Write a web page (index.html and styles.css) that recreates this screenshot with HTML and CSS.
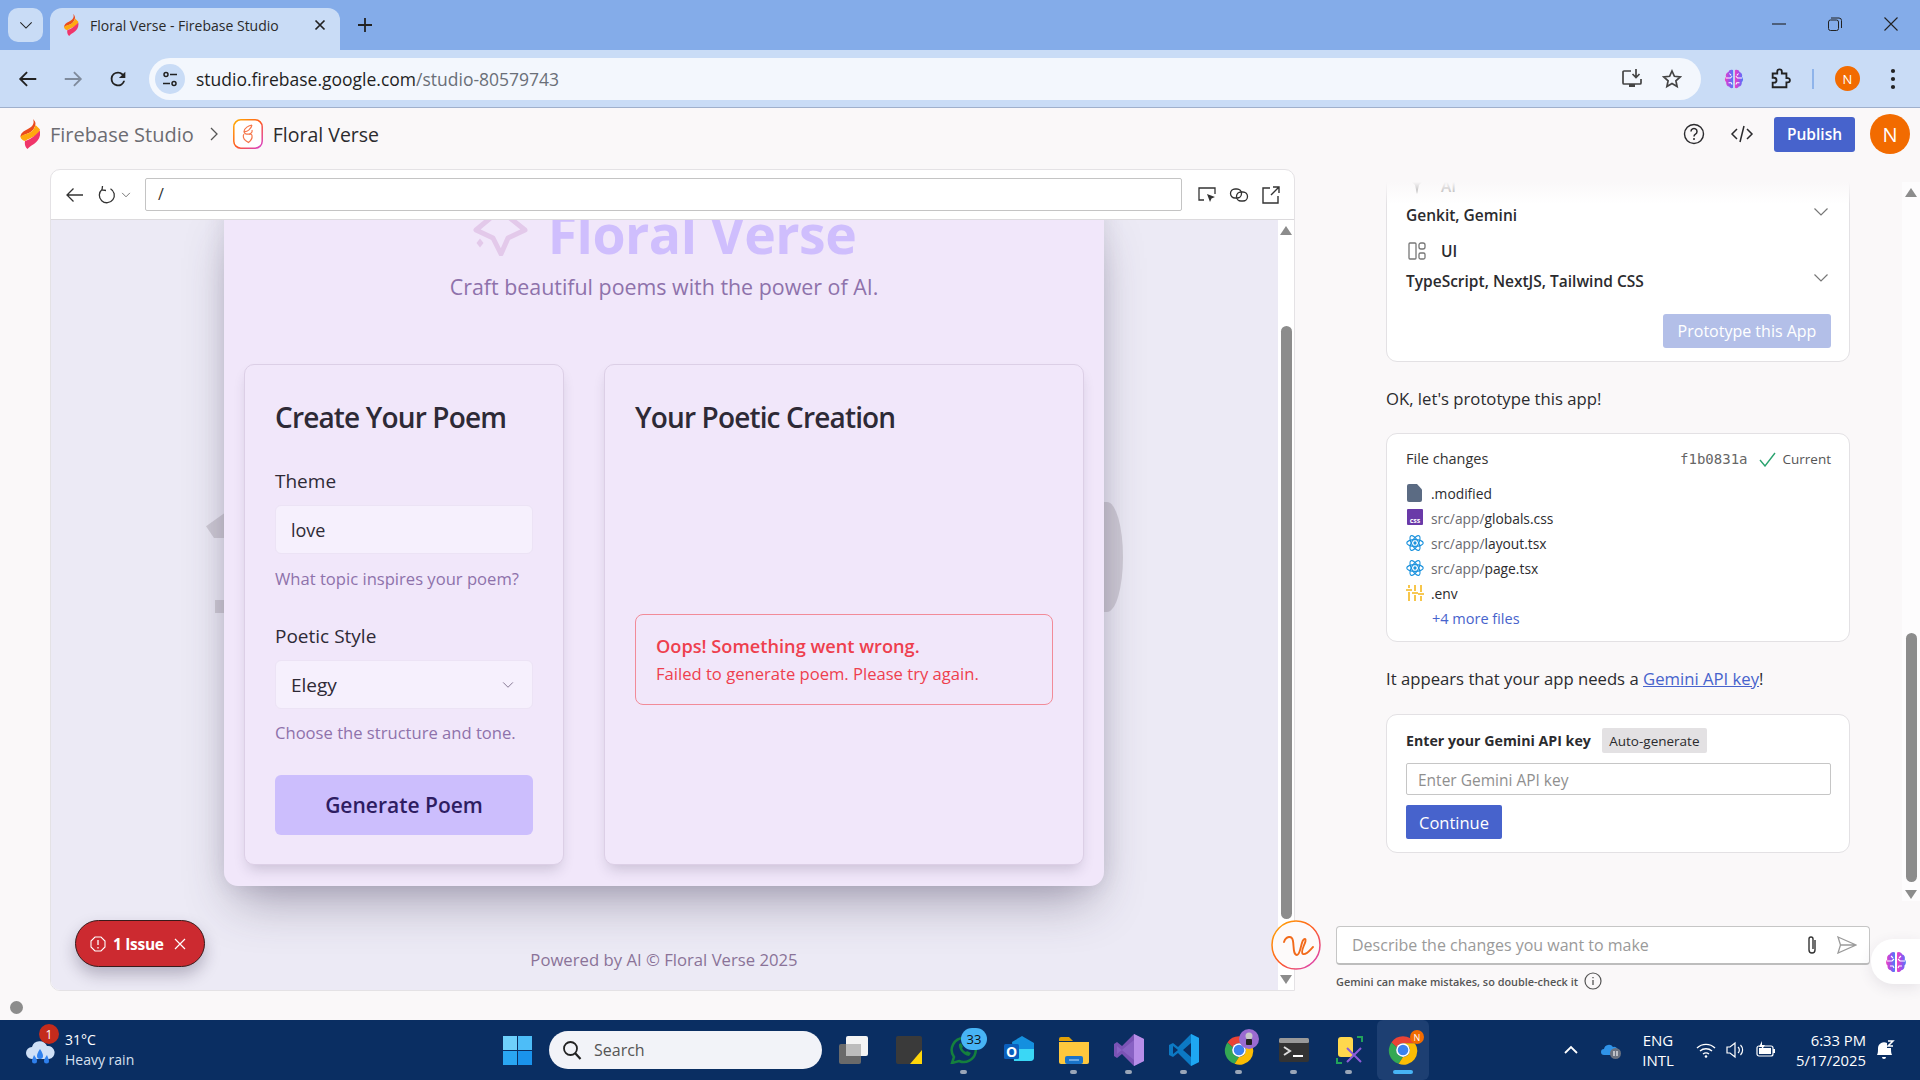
FILE: index.html
```html
<!DOCTYPE html>
<html lang="en">
<head>
<meta charset="utf-8">
<title>Floral Verse - Firebase Studio</title>
<link rel="stylesheet" href="styles.css">
</head>
<body>
<svg class="defs" width="0" height="0" aria-hidden="true">
  <defs>
    <linearGradient id="gBrain" x1="0" y1="0" x2="1" y2="0"><stop offset="0" stop-color="#f040c0"/><stop offset=".55" stop-color="#9a50ee"/><stop offset="1" stop-color="#4a80f5"/></linearGradient>
    <linearGradient id="gRing" x1="0" y1="0" x2="1" y2="1"><stop offset="0" stop-color="#ffb000"/><stop offset=".5" stop-color="#ff5a1f"/><stop offset="1" stop-color="#d63fd0"/></linearGradient>
    <symbol id="fire" viewBox="0 0 20 30">
      <path d="M13 0C15 5 12 8 7 10.500 3 12.500.5 14.500.5 18 3 16 7 15 10 13.500 12.500 12 15 9 15.500 5 15.500 3 14.500 1.500 13 0z" fill="#ea4b1d"/>
      <path d="M.5 18C1 20 2.500 21.500 5 22 8 20 12 18.500 14 17.500 17 16 19.500 14 20 10.500 18 8 17 7.500 15.500 6 14.500 10 12 12.500 9 14 5 15.500 1.500 16 .5 18z" fill="#ffa90e"/>
      <path d="M5 22C9 21 14 18 20 11.500 21 18 18 22 14 25 11 27 9 28 7.500 30 5 28 4.500 25 5 22z" fill="#f0356a"/>
    </symbol>
    <symbol id="brain" viewBox="0 0 24 24">
      <path d="M11 2.500c-2-1.200-4.500-.2-5 1.800C3.500 5 2.500 7.500 3.300 9.500 1.600 11 1.700 14 3.500 15.500c-.3 2.500 1 4.500 3.200 4.800 1 1.800 3 2.200 4.300 1.200z" fill="url(#gBrain)"/>
      <path d="M13 2.500c2-1.200 4.500-.2 5 1.800 2.500.7 3.500 3.200 2.700 5.200 1.700 1.500 1.600 4.500-.2 6 .3 2.500-1 4.500-3.200 4.800-1 1.800-3 2.200-4.300 1.200z" fill="url(#gBrain)"/>
      <path d="M3 11h5l2-2M21 11h-5l-2-2M6 16h3l1 2M18 16h-3l-1 2M7 6l2 2M17 6l-2 2" stroke="#fff" stroke-width="1.100" fill="none"/>
    </symbol>
    <symbol id="atom" viewBox="0 0 24 24">
      <g fill="none" stroke="#1b92dd" stroke-width="1.500">
        <ellipse cx="12" cy="12" rx="11" ry="4.500"/>
        <ellipse cx="12" cy="12" rx="11" ry="4.500" transform="rotate(60 12 12)"/>
        <ellipse cx="12" cy="12" rx="11" ry="4.500" transform="rotate(120 12 12)"/>
      </g>
      <circle cx="12" cy="12" r="2.200" fill="#1b92dd"/>
    </symbol>
    <symbol id="chev" viewBox="0 0 16 10"><path d="M1.500 1.500 8 8l6.500-6.500" fill="none" stroke="currentColor" stroke-width="1.200"/></symbol>
    <symbol id="chrome" viewBox="0 0 48 48">
      <path d="M24 2a22 22 0 0 1 19 11H24a11 11 0 0 0-10 6.500L5.500 12A22 22 0 0 1 24 2z" fill="#ea4335"/>
      <path d="M5.500 12 14 19.500A11 11 0 0 0 24 35l-7 11A22 22 0 0 1 5.500 12z" fill="#34a853"/>
      <path d="M43 13a22 22 0 0 1-26 33l7-11a11 11 0 0 0 9.500-16.500L24 13z" fill="#fbbc04"/>
      <circle cx="24" cy="24" r="11" fill="#fff"/><circle cx="24" cy="24" r="8.500" fill="#3b82f0"/>
    </symbol>
  </defs>
</svg>

<div class="screen">
  <header class="tabstrip">
    <div class="tabmenu"><svg width="14" height="9"><use href="#chev"/></svg></div>
    <div class="tab">
      <svg class="tab-fav" width="16" height="22"><use href="#fire"/></svg>
      <span class="tab-title">Floral Verse - Firebase Studio</span>
      <svg class="tab-x" width="12" height="12" viewBox="0 0 12 12"><path d="M1.500 1.500l9 9m0-9l-9 9" stroke="#222" stroke-width="1.700"/></svg>
    </div>
    <svg class="tab-plus" width="14" height="14" viewBox="0 0 14 14"><path d="M7 0v14M0 7h14" stroke="#222" stroke-width="1.800"/></svg>
    <div class="winctl">
      <svg width="14" height="14" viewBox="0 0 14 14"><path d="M0 7h14" stroke="#222" stroke-width="1.100"/></svg>
      <svg width="14" height="14" viewBox="0 0 14 14"><rect x=".5" y="3" width="10" height="10.500" rx="2" fill="none" stroke="#222"/><path d="M3 1h8a2.500 2.500 0 0 1 2.500 2.500V11" fill="none" stroke="#222"/></svg>
      <svg width="14" height="14" viewBox="0 0 14 14"><path d="M.5.5l13 13m0-13l-13 13" stroke="#222" stroke-width="1.100"/></svg>
    </div>
  </header>

  <div class="toolbar">
    <svg class="nav" width="22" height="22" viewBox="0 0 24 24"><path d="M21 12H4M11 4.500 3.500 12l7.500 7.500" fill="none" stroke="#222" stroke-width="2"/></svg>
    <svg class="nav" width="22" height="22" viewBox="0 0 24 24"><path d="M3 12h17M13 4.500l7.500 7.500-7.500 7.500" fill="none" stroke="#7f8b9c" stroke-width="2"/></svg>
    <svg class="nav" width="22" height="22" viewBox="0 0 24 24"><path d="M17.650 6.350A7.950 7.950 0 0 0 12 4a8 8 0 1 0 7.730 10h-2.080A6 6 0 1 1 12 6c1.660 0 3.140.690 4.220 1.780L13 11h7V4l-2.350 2.350z" fill="#222"/></svg>
    <div class="urlbar">
      <div class="site-ic"><svg width="18" height="18" viewBox="0 0 18 18"><g fill="none" stroke="#222" stroke-width="1.500"><circle cx="5" cy="4.500" r="2"/><circle cx="13" cy="13.500" r="2"/><path d="M9 4.500h7M2 13.500h7"/></g></svg></div>
      <span class="url"><span class="url-host">studio.firebase.google.com</span>/studio-80579743</span>
      <svg class="u-inst" width="22" height="22" viewBox="0 0 22 22"><path d="M10 3H3a1 1 0 0 0-1 1v11a1 1 0 0 0 1 1h16a1 1 0 0 0 1-1v-4" fill="none" stroke="#444" stroke-width="1.700"/><path d="M8 16h6v3H8z" fill="#444"/><path d="M15 1v8m-3.500-3 3.500 3.500L18.500 6" fill="none" stroke="#444" stroke-width="1.700"/></svg>
      <svg class="u-star" width="20" height="20" viewBox="0 0 20 20"><path d="M10 2l2.400 5.300 5.800.6-4.300 3.900 1.200 5.700L10 14.600l-5.100 2.900 1.200-5.700L1.800 7.900l5.800-.6z" fill="none" stroke="#444" stroke-width="1.700"/></svg>
    </div>
    <svg class="t-brain" width="22" height="24"><use href="#brain"/></svg>
    <svg class="t-puz" width="22" height="22" viewBox="0 0 24 24"><path d="M4 6h5V4a2.500 2.500 0 0 1 5 0v2h5v5h1.500a2.300 2.300 0 0 1 0 4.600H19V21H4v-5h1.500a2.700 2.700 0 0 0 0-5.400H4z" fill="none" stroke="#222" stroke-width="2"/></svg>
    <span class="t-div"></span>
    <span class="t-ava">N</span>
    <svg class="t-dots" width="6" height="22" viewBox="0 0 6 22"><circle cx="3" cy="3" r="2.100" fill="#222"/><circle cx="3" cy="11" r="2.100" fill="#222"/><circle cx="3" cy="19" r="2.100" fill="#222"/></svg>
  </div>

  <div class="apphead">
    <svg class="ah-logo" width="20" height="30"><use href="#fire"/></svg>
    <span class="ah-brand">Firebase Studio</span>
    <svg class="ah-chev" width="8" height="14" viewBox="0 0 8 14"><path d="M1 1l6 6-6 6" fill="none" stroke="#555" stroke-width="1.300"/></svg>
    <span class="ah-app">
      <svg width="30" height="30" viewBox="0 0 30 30"><rect x=".8" y=".8" width="28.400" height="28.400" rx="7" fill="#fff" stroke="url(#gRing)" stroke-width="1.500"/><path d="M19 6c-3 .5-8 3-8 6.500 0 2.500 3 3 5 2.500 2.500-.5 3.500-2 3-4M11 15c-1.500 2-.5 5 1.500 6.500l3 2c2-1.500 4-4 3.500-7-.3-1.500-2-1.500-3-1M11 12.500c3 .5 7-2 8-6.500" fill="none" stroke="#f5764a" stroke-width="1.200"/></svg>
    </span>
    <span class="ah-name">Floral Verse</span>
    <svg class="ah-help" width="22" height="22" viewBox="0 0 22 22"><circle cx="11" cy="11" r="9.500" fill="none" stroke="#2b2b2e" stroke-width="1.400"/><path d="M8 8.500a3 3 0 1 1 4.500 2.600c-1 .6-1.500 1-1.500 2.400" fill="none" stroke="#2b2b2e" stroke-width="1.500"/><circle cx="11" cy="16" r="1" fill="#2b2b2e"/></svg>
    <svg class="ah-code" width="24" height="20" viewBox="0 0 24 20"><path d="M7 5l-5 5 5 5M17 5l5 5-5 5M14 2l-4 16" fill="none" stroke="#2b2b2e" stroke-width="1.500"/></svg>
    <button class="publish">Publish</button>
    <span class="ah-ava">N</span>
  </div>

  <main class="main">
    <section class="preview">
      <div class="pv-bar">
        <svg width="20" height="20" viewBox="0 0 20 20"><path d="M18 10H2.500M8.500 3.500 2 10l6.500 6.500" fill="none" stroke="#333" stroke-width="1.300"/></svg>
        <svg class="pv-reload" width="20" height="20" viewBox="0 0 20 20"><path d="M5 4.500a7.500 7.500 0 1 0 8.500-.8M5.500 1l-.5 4 4 .5" fill="none" stroke="#333" stroke-width="1.300"/></svg>
        <svg class="pv-ch" width="10" height="6"><use href="#chev"/></svg>
        <div class="pv-input">/</div>
        <svg class="pv-t1" width="20" height="20" viewBox="0 0 20 20"><path d="M7 15H2V3h16v6" fill="none" stroke="#333" stroke-width="1.300"/><path d="M10 9l8 3-3.500 1.500L13 17z" fill="#333"/></svg>
        <svg class="pv-t2" width="20" height="20" viewBox="0 0 20 20"><g fill="none" stroke="#333" stroke-width="1.300"><rect x="1.500" y="4" width="11" height="9" rx="4.500"/><rect x="7.500" y="7" width="11" height="9" rx="4.500"/></g></svg>
        <svg class="pv-t3" width="20" height="20" viewBox="0 0 20 20"><path d="M9 3H2v15h15v-7M12 2h6v6M18 2l-8 8" fill="none" stroke="#333" stroke-width="1.400"/></svg>
      </div>
      <div class="pv-body">
        <div class="viewport">
          <span class="blob blob-a"></span><span class="blob blob-b"></span><span class="blob blob-c"></span>
          <div class="poem-page">
            <div class="hero">
              <div class="hero-title">
                <svg width="56" height="56" viewBox="0 0 56 56"><path d="M28 10 4 30l17 8 8 16 7-16 17-8z" fill="none" stroke="#e3c9ea" stroke-width="5" stroke-linejoin="round"/><path d="M8 38.500l3.500 4.500-3.500 4.500-3.500-4.500z" fill="#e3c9ea"/></svg>
                <h1>Floral Verse</h1>
              </div>
              <p class="hero-sub">Craft beautiful poems with the power of AI.</p>
            </div>
            <div class="cards">
              <form class="card card-form">
                <h2>Create Your Poem</h2>
                <label class="lbl lbl-first">Theme</label>
                <div class="field">love</div>
                <p class="hint">What topic inspires your poem?</p>
                <label class="lbl lbl-second">Poetic Style</label>
                <div class="field field-sel">Elegy <svg width="12" height="8"><use href="#chev"/></svg></div>
                <p class="hint hint-b">Choose the structure and tone.</p>
                <div class="gen">Generate Poem</div>
              </form>
              <div class="card card-out">
                <h2>Your Poetic Creation</h2>
                <div class="alert">
                  <strong>Oops! Something went wrong.</strong>
                  <span>Failed to generate poem. Please try again.</span>
                </div>
              </div>
            </div>
          </div>
          <p class="powered">Powered by AI © Floral Verse 2025</p>
          <div class="issue">
            <svg width="16" height="16" viewBox="0 0 16 16"><path d="M5 1h6l4 4v6l-4 4H5l-4-4V5z" fill="none" stroke="#fff" stroke-width="1.100"/><path d="M8 4v5M8 11v1.500" stroke="#fff" stroke-width="1.300"/></svg>
            <b>1 Issue</b>
            <svg class="issue-x" width="12" height="12" viewBox="0 0 12 12"><path d="M1 1l10 10M11 1L1 11" stroke="#fff" stroke-width="1.200"/></svg>
          </div>
        </div>
        <div class="sb sb-pv"><i class="up"></i><i class="thumb"></i><i class="dn"></i></div>
      </div>
    </section>

    <aside class="chat">
      <div class="chat-top">
        <div class="chat-scroll">
          <div class="bubble stack">
            <div class="st-head st-ai"><svg width="18" height="18" viewBox="0 0 18 18"><path d="M1 2h16l-6 6-2 9-2-9z" fill="#777"/></svg><b>AI</b></div>
            <div class="st-val st-g">Genkit, Gemini<svg width="16" height="10"><use href="#chev"/></svg></div>
            <div class="st-head st-ui"><svg width="18" height="18" viewBox="0 0 18 18"><g fill="none" stroke="#777" stroke-width="1.300"><rect x="1" y="1" width="7" height="16" rx="1"/><rect x="11" y="1" width="6" height="6" rx="2"/><rect x="11" y="11" width="6" height="6" rx="1.500"/></g></svg><b>UI</b></div>
            <div class="st-val st-t">TypeScript, NextJS, Tailwind CSS<svg width="16" height="10"><use href="#chev"/></svg></div>
            <div class="st-act"><span class="proto">Prototype this App</span></div>
          </div>
          <p class="say say-ok">OK, let's prototype this app!</p>
          <div class="bubble files">
            <div class="f-head">
              <span class="f-title">File changes</span>
              <code>f1b0831a</code>
              <svg class="f-check" width="17" height="15" viewBox="0 0 17 15"><path d="M1 8l5 6L16 1" fill="none" stroke="#2aa36f" stroke-width="1.400"/></svg>
              <span class="f-cur">Current</span>
            </div>
            <ul class="f-list">
              <li><svg width="18" height="18" viewBox="0 0 18 18"><path d="M3 0h8l5 5.500V16a2 2 0 0 1-2 2H3a2 2 0 0 1-2-2V2a2 2 0 0 1 2-2z" fill="#5b6b83"/></svg><span>.modified</span></li>
              <li><svg width="18" height="18" viewBox="0 0 18 18"><rect x="1" width="16" height="16" rx="1" fill="#6a3aa8"/><text class="css-t" x="9" y="14">css</text></svg><span><em>src/app/</em>globals.css</span></li>
              <li><svg width="18" height="18"><use href="#atom"/></svg><span><em>src/app/</em>layout.tsx</span></li>
              <li><svg width="18" height="18"><use href="#atom"/></svg><span><em>src/app/</em>page.tsx</span></li>
              <li><svg width="18" height="18" viewBox="0 0 18 18"><path d="M3 1v3M3 8v9M9 1v6M9 11v6M15 1v7M15 12v5M0 6h6M6 9h6M12 10h6" stroke="#f5b81f" stroke-width="1.600"/></svg><span>.env</span></li>
              <li class="f-more"><span>+4 more files</span></li>
            </ul>
          </div>
          <p class="say say-key">It appears that your app needs a <a>Gemini API key</a>!</p>
          <div class="bubble keyb">
            <div class="k-head"><b>Enter your Gemini API key</b><span class="auto">Auto-generate</span></div>
            <div class="k-input">Enter Gemini API key</div>
            <div class="k-go">Continue</div>
          </div>
        </div>
        <div class="sb sb-chat"><i class="up"></i><i class="thumb"></i><i class="dn"></i></div>
      </div>
      <div class="prompt">
        <span>Describe the changes you want to make</span>
        <svg class="p-clip" width="14" height="20" viewBox="0 0 14 20"><path d="M10 5v10a3 3 0 0 1-6 0V4a2 2 0 0 1 4 0v10" fill="none" stroke="#333" stroke-width="1.400"/></svg>
        <svg class="p-send" width="20" height="18" viewBox="0 0 20 18"><path d="M1 1l18 8-18 8 2.500-8zM3.500 9H19" fill="none" stroke="#9b9b9b" stroke-width="1.300"/></svg>
      </div>
      <div class="note"><span>Gemini can make mistakes, so double-check it</span><svg width="18" height="18" viewBox="0 0 18 18"><circle cx="9" cy="9" r="8" fill="none" stroke="#555" stroke-width="1.200"/><path d="M9 8v5M9 5v1.300" stroke="#555" stroke-width="1.300"/></svg></div>
      <div class="sparkbtn"><svg width="50" height="50" viewBox="0 0 50 50"><circle cx="25" cy="25" r="24" fill="#fdfafa" stroke="url(#gRing)" stroke-width="1.500"/><path d="M13 22C15 16 21 15 22 21 23 27 22 35 26 35 30 35 30 18 34 19 37 20 28 32 32 34 36 35 39 30 42 27" fill="none" stroke="#f26a1b" stroke-width="1.900" stroke-linecap="round"/></svg></div>
      <div class="brain-tab"><svg width="24" height="28"><use href="#brain"/></svg></div>
    </aside>
  </main>
  <div class="bottom-gap"><span class="dot"></span></div>

  <footer class="taskbar">
    <div class="weather">
      <span class="w-ic">
        <svg width="30" height="26" viewBox="0 0 30 26"><path d="M7 19a6 6 0 0 1 0-12 8 8 0 0 1 15-1 6.500 6.500 0 0 1 2 13z" fill="#cfe0f7"/><path d="M9 15c2 3 3 4 3 6a2.500 2.500 0 0 1-5 0c0-2 1-3 2-6zM15 9c2 3 3 5 3 7a3 3 0 0 1-6 0c0-2 1-4 3-7zM22 15c1 3 2 4 2 6a2.500 2.500 0 0 1-5 0c0-2 1-3 3-6z" fill="#2f80ed"/></svg>
        <i class="w-badge">1</i>
      </span>
      <div class="w-txt"><span>31°C</span><span class="w-sub">Heavy rain</span></div>
    </div>
    <div class="tb-item"><svg width="29" height="29" viewBox="0 0 29 29"><rect width="14" height="14" fill="#6ed0fb"/><rect x="15" width="14" height="14" fill="#4dbdf8"/><rect y="15" width="14" height="14" fill="#2aa6f2"/><rect x="15" y="15" width="14" height="14" fill="#1a93ec"/></svg></div>
    <div class="search"><svg width="20" height="20" viewBox="0 0 20 20"><circle cx="8.500" cy="8.500" r="6.500" fill="none" stroke="#222" stroke-width="1.800"/><path d="M13 13l5.500 6" stroke="#222" stroke-width="2.200"/></svg><span>Search</span></div>
    <div class="tb-item"><svg width="30" height="28" viewBox="0 0 30 28"><rect y="8" width="22" height="20" rx="2" fill="#6a6a6a"/><rect x="7" y="0" width="22" height="20" rx="2" fill="#f4f4f4"/><rect x="7" y="8" width="15" height="12" fill="#bdbdbd"/></svg></div>
    <div class="tb-item"><svg width="26" height="28" viewBox="0 0 26 28"><rect width="26" height="28" rx="2" fill="#3a3a3a"/><path d="M26 14v14H14z" fill="#ffd60a"/></svg></div>
    <div class="tb-item pin"><svg width="30" height="28" viewBox="0 0 30 28"><path d="M15 2a12 12 0 0 0-10 19L3 27l7-2a12 12 0 1 0 5-23z" fill="none" stroke="#15803d" stroke-width="2.500"/><path d="M10 8c-1 5 4 11 10 12l2-3-4-2-1 1c-2-1-3-2-4-4l1-1-2-4z" fill="#15803d"/></svg><i class="tb-badge">33</i></div>
    <div class="tb-item"><svg width="30" height="28" viewBox="0 0 30 28"><path d="M8 6l10-6 12 7v14a4 4 0 0 1-4 4H10z" fill="#1490df"/><path d="M10 13h20v8a4 4 0 0 1-4 4H10z" fill="#3ad7f5"/><rect y="8" width="15" height="15" rx="1.500" fill="#0a5fbd"/><text class="ol-t" x="7.500" y="20.500">O</text></svg></div>
    <div class="tb-item pin"><svg width="30" height="28" viewBox="0 0 30 28"><path d="M0 3a2 2 0 0 1 2-2h8l4 4h-14z" fill="#e0a008"/><path d="M0 6h30v20a2 2 0 0 1-2 2H2a2 2 0 0 1-2-2z" fill="#ffc83d"/><rect x="6" y="20" width="18" height="8" rx="2" fill="#1a73c9"/><path d="M10 24h10" stroke="#bfe0ff" stroke-width="1"/></svg></div>
    <div class="tb-item pin"><svg width="30" height="32" viewBox="0 0 30 32"><path d="M20 0l10 5v22l-10 5-12-12-5 4-3-2V10l3-2 5 4z" fill="#7a53b5"/><path d="M20 0l10 5v22l-10 5z" fill="#b78ee8"/><path d="M3 12l17 14V6L3 20z" fill="#8a64c4" opacity=".9"/></svg></div>
    <div class="tb-item pin"><svg width="30" height="32" viewBox="0 0 30 32"><path d="M22 0l8 4v24l-8 4-13-13-5 4-4-2V11l4-2 5 4z" fill="#0c79c4"/><path d="M22 0l8 4v24l-8 4z" fill="#1ea7f2"/><path d="M4 12l5 4-5 4zM22 9l-8 7 8 7z" fill="#0a2e62"/></svg></div>
    <div class="tb-item pin"><svg width="30" height="30"><use href="#chrome"/></svg><i class="tb-lock"><svg width="12" height="14" viewBox="0 0 12 14"><circle cx="6" cy="4" r="3.500" fill="#c8c8c8"/><rect x="3" y="7" width="6" height="6" rx="1" fill="#222"/></svg></i></div>
    <div class="tb-item pin"><svg width="30" height="24" viewBox="0 0 30 24"><rect width="30" height="24" rx="2" fill="#333"/><rect width="30" height="5" rx="1.500" fill="#999"/><path d="M5 9l6 4-6 4" fill="none" stroke="#ddd" stroke-width="2"/><path d="M14 18h10" stroke="#fff" stroke-width="2"/></svg></div>
    <div class="tb-item pin"><svg width="28" height="30" viewBox="0 0 28 30"><rect x="3" y="2" width="15" height="20" rx="3" fill="#ffd84d"/><path d="M22 2h5v5M2 23v5h5" fill="none" stroke="#22a35a" stroke-width="2"/><path d="M12 27l14-14M26 27L12 13" stroke="#8e5cd9" stroke-width="2"/></svg></div>
    <div class="tb-item active"><svg width="30" height="30"><use href="#chrome"/></svg><i class="tb-n">N</i></div>
    <div class="tray">
      <div class="t-cell t-up"><svg width="16" height="10" viewBox="0 0 16 10"><path d="M2 8l6-6 6 6" fill="none" stroke="#fff" stroke-width="1.800"/></svg></div>
      <div class="t-cell t-od"><svg width="20" height="18" viewBox="0 0 20 18"><path d="M3 14a3 3 0 0 1 0-6 5 5 0 0 1 9-2 4 4 0 0 1 5 4 2 2 0 0 1 0 4z" fill="#2f93e8"/><circle cx="14.500" cy="12.500" r="5.500" fill="#6b7280"/><path d="M13 10v5M16 10v5" stroke="#fff" stroke-width="1.100"/></svg></div>
      <div class="t-lang"><span>ENG</span><span>INTL</span></div>
      <div class="t-cell"><svg width="20" height="16" viewBox="0 0 20 16"><path d="M1 6a13 13 0 0 1 18 0M4 9a9 9 0 0 1 12 0M7 12a5 5 0 0 1 6 0" fill="none" stroke="#fff" stroke-width="1.400"/><circle cx="10" cy="14.500" r="1.300" fill="#fff"/></svg></div>
      <div class="t-cell"><svg width="20" height="18" viewBox="0 0 20 18"><path d="M1 6h3l5-4v14l-5-4H1z" fill="none" stroke="#fff" stroke-width="1.200"/><path d="M12 6a4 4 0 0 1 0 6M14.500 4a7 7 0 0 1 0 10" fill="none" stroke="#fff" stroke-width="1.200"/></svg></div>
      <div class="t-cell"><svg width="20" height="18" viewBox="0 0 20 18"><rect x="1" y="5" width="16" height="10" rx="2" fill="none" stroke="#fff" stroke-width="1.200"/><rect x="3" y="7" width="12" height="6" fill="#fff"/><path d="M18 8v4" stroke="#fff" stroke-width="2"/><path d="M6 0L3 6h3l-1 4 4-6H6z" fill="#fff"/></svg></div>
      <div class="t-clock"><span>6:33 PM</span><span>5/17/2025</span></div>
      <div class="t-cell t-bell"><svg width="20" height="20" viewBox="0 0 20 20"><path d="M2 15c1-2 1-4 1-7a6 6 0 0 1 9-5v5h4c0 3 0 5 1 7z" fill="#fff"/><path d="M7 17a2 2 0 0 0 4 0" fill="#fff"/><path d="M13 1h5l-5 5h5" fill="none" stroke="#fff" stroke-width="1.500"/></svg></div>
    </div>
  </footer>
</div>
</body>
</html>
```
FILE: styles.css
```css
* { box-sizing: border-box; }
html, body { margin: 0; padding: 0; }
body { width: 1920px; height: 1080px; overflow: hidden; font-family: "Open Sans", "Noto Sans", sans-serif; color: #2b2b2e; }
.defs { display: block; position: absolute; }
.screen { width: 1920px; height: 1080px; display: flex; flex-direction: column; background: #faf8f9; }
p, h1, h2, ul { margin: 0; padding: 0; }
i, em { font-style: normal; }
svg { display: block; flex: none; }

/* tab strip */
.tabstrip { height: 50px; flex: none; background: #84ace9; display: flex; align-items: flex-end; padding-left: 8px; }
.tabmenu { width: 35px; height: 34px; margin-bottom: 8px; border-radius: 10px; background: #c9dcf6; display: flex; align-items: center; justify-content: center; color: #222; }
.tab { width: 290px; height: 42px; margin-left: 7px; background: #c9dcf6; border-radius: 12px 12px 0 0; display: flex; align-items: center; padding: 0 14px 8px 13px; }
.tab-title { font-size: 14px; color: #2a2a2a; margin-left: 11px; white-space: nowrap; }
.tab-x { margin-left: auto; }
.tab-plus { margin: 0 0 18px 18px; }
.winctl { margin-left: auto; align-self: stretch; display: flex; align-items: flex-start; gap: 42px; padding: 17px 22px 0 0; }

/* toolbar */
.toolbar { height: 58px; flex: none; background: #c9dcf6; border-bottom: 1px solid #9fb0cc; display: flex; align-items: center; padding: 0 17px 0 17px; }
.nav { margin-right: 23px; }
.urlbar { width: 1552px; height: 42px; margin-left: -3px; background: #f3f7fd; border-radius: 21px; display: flex; align-items: center; padding-left: 6px; }
.site-ic { width: 30px; height: 30px; border-radius: 50%; background: #c9dcf6; display: flex; align-items: center; justify-content: center; }
.url { margin-left: 11px; font-size: 17.500px; color: #6a6f78; white-space: nowrap; }
.url-host { color: #1f1f1f; }
.u-inst { margin-left: auto; }
.u-star { margin: 0 19px 0 19px; }
.t-brain { margin-left: 22px; }
.t-puz { margin-left: 24px; }
.t-div { width: 2px; height: 20px; background: #8fb4ea; margin-left: 21px; }
.t-ava { width: 25px; height: 25px; margin-left: 21px; border-radius: 50%; background: #f26b00; color: #fff; font-size: 13px; display: flex; align-items: center; justify-content: center; }
.t-dots { margin-left: 30px; }

/* app header */
.apphead { height: 52px; flex: none; display: flex; align-items: center; padding: 0 10px 0 20px; }
.ah-brand { margin-left: 10px; font-size: 20px; color: #6c6c72; white-space: nowrap; }
.ah-chev { margin-left: 16px; }
.ah-app { margin-left: 15px; }
.ah-name { margin-left: 10px; font-size: 19.500px; font-weight: 500; color: #2b2b2e; white-space: nowrap; }
.ah-help { margin-left: auto; }
.ah-code { margin-left: 25px; }
.publish { margin-left: 20px; width: 81px; height: 35px; border: 0; border-radius: 3px; background: #4763cc; color: #fff; font: 600 15.500px "Open Sans", sans-serif; padding: 0; }
.ah-ava { margin-left: 15px; width: 40px; height: 40px; border-radius: 50%; background: #f26b00; color: #fff; font-size: 20px; display: flex; align-items: center; justify-content: center; }

/* main */
.main { flex: none; height: 822px; margin-top: 9px; display: flex; position: relative; padding-left: 50px; }
.preview { width: 1245px; height: 822px; flex: none; display: flex; flex-direction: column; background: #fff; border: 1px solid #e4e2e5; border-radius: 10px 10px 0 10px; overflow: hidden; }
.pv-bar { height: 50px; flex: none; display: flex; align-items: center; padding: 0 10px 0 14px; border-bottom: 1px solid #dcdadd; }
.pv-reload { margin-left: 12px; }
.pv-ch { margin-left: 4px; color: #444; }
.pv-input { flex: none; width: 1037px; height: 33px; margin-left: 14px; border: 1px solid #c4c4c4; border-radius: 2px; padding: 4px 12px; font-size: 16px; color: #333; }
.pv-t1 { margin-left: 15px; }
.pv-t2 { margin-left: 12px; }
.pv-t3 { margin-left: 12px; }
.pv-body { flex: 1; min-height: 0; display: flex; }
.viewport { position: relative; flex: 1; overflow: hidden; background: #eceaf5; display: flex; flex-direction: column; justify-content: flex-end; }
.blob { position: absolute; background: #cfcbd6; }
.blob-a { left: 155px; top: 292px; width: 20px; height: 26px; clip-path: polygon(100% 0, 0 55%, 40% 100%, 100% 100%); }
.blob-b { left: 164px; top: 380px; width: 12px; height: 13px; }
.blob-c { left: 1040px; top: 282px; width: 32px; height: 110px; border-radius: 0 50% 50% 0 / 0 50% 50% 0; }

.poem-page { position: relative; width: 880px; margin-left: 173px; flex: none; background: #f1e7fa; border-radius: 0 0 14px 14px; box-shadow: 0 25px 50px -12px rgba(60, 50, 80, .42), 0 0 22px rgba(60, 50, 80, .1); padding: 0 20px 21px 20px; }
.hero { text-align: center; }
.hero-title { display: flex; align-items: center; justify-content: center; gap: 20px; height: 60px; margin-bottom: 7px; }
.hero-title svg { margin-top: -12px; }
.hero-title h1 { font-size: 53.500px; font-weight: 700; line-height: 60px; color: #cfbefd; white-space: nowrap; letter-spacing: -.5px; }
.hero-sub { font-size: 21.400px; line-height: 32px; color: #8e72ab; margin-bottom: 61px; }
.cards { display: flex; gap: 40px; }
.card { height: 501px; background: #f1e7fa; border: 1px solid #dccfe6; border-radius: 10px; box-shadow: 0 8px 14px -4px rgba(60, 50, 80, .22); padding: 32px 30px 0; }
.card-form { width: 320px; }
.card-out { width: 480px; }
.card h2 { font-size: 28px; font-weight: 600; line-height: 40px; color: #2e2a36; white-space: nowrap; letter-spacing: -.85px; }
.lbl { display: block; font-size: 19px; font-weight: 500; line-height: 24px; color: #2e2a36; }
.lbl-first { margin-top: 32px; }
.lbl-second { margin-top: 33px; }
.field { margin-top: 12px; height: 49px; background: #f6f0fd; border: 1px solid #ece3f5; border-radius: 6px; display: flex; align-items: center; padding: 0 15px; font-size: 18px; color: #2e2a36; }
.field-sel { justify-content: space-between; color: #2e2a36; font-size: 19px; }
.field-sel svg { color: #7a6c88; margin-right: 3px; }
.hint { margin-top: 13px; font-size: 16.600px; line-height: 24px; color: #8e72ab; white-space: nowrap; }
.hint-b { margin-top: 12px; }
.gen { margin-top: 30px; height: 60px; border-radius: 6px; background: #ccbefd; color: #2e1d62; font-size: 21px; font-weight: 600; display: flex; align-items: center; justify-content: center; }
.alert { margin-top: 177px; width: 418px; height: 91px; border: 1px solid #f28b98; border-radius: 8px; padding: 18px 20px 0; color: #ee3f4e; display: flex; flex-direction: column; }
.alert strong { font-size: 18.200px; font-weight: 600; line-height: 26px; white-space: nowrap; }
.alert span { font-size: 16.600px; line-height: 26px; margin-top: 2px; white-space: nowrap; }
.powered { margin: 62px 0 18px 173px; width: 880px; text-align: center; font-size: 16.700px; line-height: 24px; color: #8a7398; }
.issue { position: absolute; left: 24px; bottom: 23px; width: 130px; height: 47px; border-radius: 24px; background: #cc2a30; border: 1px solid #3a1a1a; box-shadow: 0 8px 16px rgba(40, 30, 60, .28); color: #fff; display: flex; align-items: center; padding-left: 14px; font-size: 15.500px; }
.issue b { font-weight: 700; margin-left: 7px; white-space: nowrap; letter-spacing: -.3px; }
.issue-x { margin-left: 10px; }

/* scrollbars */
.sb { flex: none; width: 16px; display: flex; flex-direction: column; align-items: center; background: #fff; }
.sb .up { width: 0; height: 0; border: 6px solid transparent; border-top: 0; border-bottom: 9px solid #8c8c8c; }
.sb .dn { width: 0; height: 0; border: 6px solid transparent; border-bottom: 0; border-top: 9px solid #8c8c8c; }
.sb .thumb { width: 11px; background: #8c8c8c; border-radius: 6px; }
.sb-pv { padding-top: 6px; }
.sb-pv .thumb { height: 593px; margin: 91px 0 56px; }

/* chat */
.chat { flex: 1; min-width: 0; position: relative; }
.chat-top { height: 719px; margin-top: 13px; display: flex; }
.chat-scroll { position: relative; width: 607px; padding: 0 52px 48px 91px; overflow: hidden; display: flex; flex-direction: column; justify-content: flex-end; }
.chat-scroll::before { content: ""; position: absolute; z-index: 2; left: 0; right: 0; top: 0; height: 22px; background: linear-gradient(#faf8f9, rgba(250, 248, 249, 0)); }
.bubble { flex: none; background: #fff; border: 1px solid #e3e1e4; border-radius: 11px; }
.stack { padding: 0 18px 13px 19px; }
.st-head { display: flex; align-items: center; gap: 15px; font-size: 15.500px; height: 24px; }
.st-head svg { margin-left: 2px; }
.st-head b { font-weight: 600; }
.st-ai { height: 22px; color: #888; }
.st-val { display: flex; justify-content: space-between; align-items: center; font-size: 15.500px; font-weight: 600; line-height: 24px; color: #2b2b2e; white-space: nowrap; }
.st-val svg { color: #777; margin: -6px 2px 0 0; }
.st-g { margin-top: 6px; }
.st-ui { margin-top: 12px; }
.st-t { margin-top: 6px; }
.st-act { margin-top: 21px; display: flex; justify-content: flex-end; }
.proto { width: 168px; height: 34px; border-radius: 3px; background: #b3bfe8; color: #fff; font-size: 16px; display: flex; align-items: center; justify-content: center; white-space: nowrap; }
.say { font-size: 16.700px; line-height: 26px; color: #2b2b2e; white-space: nowrap; flex: none; }
.say-ok { margin: 24px 0 21px; }
.say-key { margin: 24px 0 22px; }
.say a { color: #4763cc; text-decoration: underline; }
.files { padding: 14px 18px 10px 19px; }
.f-head { display: flex; align-items: center; line-height: 22px; font-size: 14.500px; }
.f-title { color: #333; }
.f-head code { margin-left: auto; font: 14px "DejaVu Sans Mono", monospace; color: #666; }
.f-check { margin-left: 11px; }
.f-cur { margin-left: 7px; color: #555; font-size: 13.500px; font-weight: 500; }
.f-list { list-style: none; margin-top: 11px; }
.f-list li { height: 25px; display: flex; align-items: center; font-size: 13.800px; font-weight: 500; gap: 7px; color: #2b2b2e; white-space: nowrap; }
.f-list svg { margin-top: -2px; }
.f-list em { color: #6a6a70; font-weight: 400; }
.f-more { padding-left: 26px; color: #4763cc !important; font-weight: 400 !important; font-size: 14.500px !important; }
.css-t { font: 700 7px "Open Sans", sans-serif; fill: #fff; text-anchor: middle; }
.ol-t { font: 700 14px "Open Sans", sans-serif; fill: #fff; text-anchor: middle; }
.keyb { padding: 13px 18px 13px 19px; }
.k-head { display: flex; align-items: center; gap: 11px; font-size: 14.200px; }
.k-head b { font-weight: 700; white-space: nowrap; }
.auto { width: 105px; height: 25px; border-radius: 2px; background: #e3e1e3; font-size: 13.500px; display: flex; align-items: center; justify-content: center; white-space: nowrap; }
.k-input { margin-top: 10px; height: 32px; border: 1px solid #c6c6c6; border-radius: 2px; padding-left: 11px; font-size: 15.500px; line-height: 32px; color: #8f8f8f; }
.k-go { margin-top: 10px; width: 96px; height: 34px; border-radius: 2px; background: #4763cc; color: #fff; font-size: 16.500px; display: flex; align-items: center; justify-content: center; }
.sb-chat { width: 18px; margin-left: 0; background: #fdfcfd; padding-top: 6px; height: 719px; }
.sb-chat .thumb { height: 249px; margin: 436px 0 8px; }
.prompt { margin: 25px 0 0 41px; width: 534px; height: 39px; background: #fff; border: 1px solid #c6c6c6; border-bottom: 2px solid #bdbdbd; border-radius: 4px; display: flex; align-items: center; padding-left: 15px; font-size: 16px; color: #9a9a9a; white-space: nowrap; }
.p-clip { margin-left: auto; }
.p-send { margin: 0 12px 0 18px; }
.note { margin: 7px 0 0 41px; display: flex; align-items: center; gap: 6px; font-size: 10.900px; font-weight: 600; color: #555; white-space: nowrap; }
.sparkbtn { position: absolute; left: -24px; top: 751px; width: 50px; height: 50px; }
.brain-tab { position: absolute; right: 0; top: 770px; width: 49px; height: 45px; background: #fff; border-radius: 22px 0 0 22px; box-shadow: 0 4px 14px rgba(60, 50, 80, .1); display: flex; align-items: center; justify-content: flex-end; padding-right: 12px; }

.bottom-gap { height: 29px; flex: none; margin-top: 0; padding: 10px 0 0 10px; }
.dot { display: block; width: 13px; height: 13px; border-radius: 50%; background: #8c8c8c; }

/* taskbar */
.taskbar { height: 60px; flex: none; background: #0a2e62; display: flex; align-items: center; color: #fff; }
.weather { width: 490px; flex: none; display: flex; align-items: center; padding-left: 25px; }
.w-ic { position: relative; width: 30px; height: 26px; margin-top: 6px; }
.w-badge { position: absolute; left: 14px; top: -16px; width: 20px; height: 20px; border-radius: 50%; background: #c42b1c; font-size: 12px; display: flex; align-items: center; justify-content: center; }
.w-txt { margin-left: 10px; display: flex; flex-direction: column; font-size: 14px; line-height: 20px; white-space: nowrap; }
.w-sub { color: #d7e0ef; }
.tb-item { width: 55px; height: 60px; flex: none; display: flex; align-items: center; justify-content: center; position: relative; }
.tb-item.pin::after { content: ""; position: absolute; left: 24px; top: 50px; width: 7px; height: 4px; border-radius: 2px; background: #9aa6b8; }
.tb-badge { position: absolute; left: 25px; top: 8px; width: 26px; height: 22px; border-radius: 11px; background: #47b4f5; color: #111; font-size: 13px; display: flex; align-items: center; justify-content: center; }
.tb-lock { position: absolute; left: 28px; top: 9px; width: 20px; height: 20px; border-radius: 50%; background: #9a6bd0; display: flex; align-items: center; justify-content: center; }
.active { background: #1d3f72; border-radius: 6px; width: 52px; margin-left: 1px; }
.active::after { content: ""; position: absolute; left: 16px; top: 50px; width: 20px; height: 4px; border-radius: 2px; background: #47b4f5; }
.tb-n { position: absolute; left: 33px; top: 10px; width: 14px; height: 14px; border-radius: 50%; background: #f26b00; font-size: 9px; display: flex; align-items: center; justify-content: center; }
.search { width: 273px; height: 38px; flex: none; margin: 0 4px; background: #f2f3f8; border-radius: 19px; display: flex; align-items: center; padding-left: 13px; color: #555; font-size: 16px; gap: 12px; }
.tray { flex: 1; display: flex; align-items: center; justify-content: flex-end; padding-right: 16px; }
.t-cell { width: 30px; height: 60px; display: flex; align-items: center; justify-content: center; }
.t-od { width: 50px; }
.t-lang { width: 44px; margin-right: 11px; display: flex; flex-direction: column; align-items: center; font-size: 15px; line-height: 20px; }
.t-clock { width: 85px; display: flex; flex-direction: column; align-items: flex-end; font-size: 14.800px; line-height: 20px; white-space: nowrap; }
.t-bell { width: 38px; }
```
